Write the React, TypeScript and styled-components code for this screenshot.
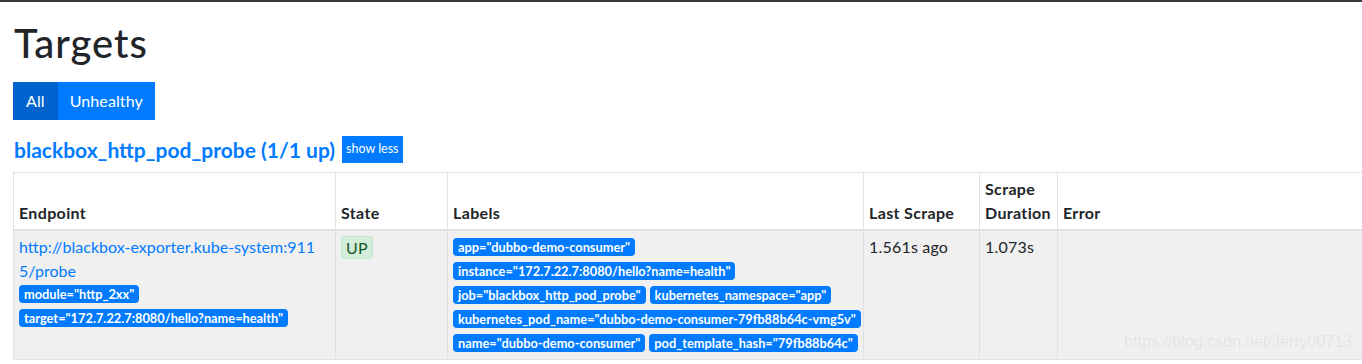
import React from "react";
import styled, { createGlobalStyle } from "styled-components";

const Global = createGlobalStyle`
  html, body { margin: 0; padding: 0; background: #fff; overflow: hidden; }
  body { font-family: Lato, "Noto Sans", sans-serif; color: #212529; font-size: 16px; line-height: 1.5; }
`;

const TopBar = styled.div`
  height: 2px;
  background: #343a40;
`;

const Page = styled.main`
  position: relative;
  padding: 0 0 0 13px;
  display: flex;
  flex-direction: column;
`;

const Title = styled.h1`
  margin: 17px 0 0 1px;
  font-size: 40px;
  font-weight: 500;
  line-height: 48px;
  letter-spacing: 1px;
`;

const Group = styled.div`
  display: flex;
  margin-top: 15px;
`;

const ToggleButton = styled.button<{ $active?: boolean }>`
  height: 38px;
  padding: 0 ${(p) => (p.$active ? "13px" : "12px")};
  border: none;
  font: inherit;
  font-size: 16px;
  letter-spacing: 0.1px;
  color: #fff;
  background: ${(p) => (p.$active ? "#0062cc" : "#007bff")};
  cursor: pointer;
`;

const JobHeader = styled.div`
  display: flex;
  align-items: center;
  gap: 7px;
  margin-top: 16px;
  height: 27px;
`;

const JobLink = styled.a`
  font-size: 21px;
  font-weight: 700;
  color: #007bff;
  text-decoration: none;
  margin-left: 1px;
`;

const SmallButton = styled.button`
  height: 27px;
  padding: 0 4px;
  border: none;
  background: #007bff;
  color: #fff;
  font: inherit;
  font-size: 12.5px;
`;

const Table = styled.table`
  margin-top: 9px;
  width: 1360px;
  border-collapse: collapse;
  table-layout: fixed;
`;

const Th = styled.th`
  text-align: left;
  vertical-align: bottom;
  font-weight: 700;
  padding: 4px 5px;
  border: 1px solid #dee2e6;
  border-bottom: 2px solid #dee2e6;
  line-height: 24px;
  letter-spacing: 0.35px;
`;

const Row = styled.tr`
  background: #f0f0f0;
`;

const Td = styled.td`
  vertical-align: top;
  padding: 4px 5px;
  border: 1px solid #dee2e6;
  line-height: 24px;
  letter-spacing: 0.2px;
`;

const EndpointLink = styled.a`
  color: #007bff;
  text-decoration: none;
  word-break: break-all;
  letter-spacing: 0;
`;

const BadgeList = styled.div`
  display: flex;
  flex-wrap: wrap;
  column-gap: 4px;
  row-gap: 6px;
  padding: 3px 0;
`;

const EndpointBadges = styled(BadgeList)`
  flex-direction: column;
  align-items: flex-start;
  padding-top: 2px;
`;

const Badge = styled.span`
  display: inline-block;
  background: #007bff;
  color: #fff;
  font-size: 12.8px;
  font-weight: 700;
  line-height: 12px;
  padding: 3px 5px;
  border-radius: 4px;
  white-space: nowrap;
  letter-spacing: 0;
`;

const StateBadge = styled.span`
  display: inline-block;
  margin-top: 1px;
  padding: 0 4px;
  line-height: 21px;
  background: #d4edda;
  border: 1px solid #c3e6cb;
  color: #155724;
  border-radius: 3px;
`;

const Watermark = styled.div`
  position: absolute;
  right: 10px;
  bottom: 6px;
  font-family: "Liberation Sans", Arial, sans-serif;
  font-size: 16px;
  color: #e2e2e2;
  text-shadow: 0 0 1px #fff;
  pointer-events: none;
`;

const labels = [
  'app="dubbo-demo-consumer"',
  'instance="172.7.22.7:8080/hello?name=health"',
  'job="blackbox_http_pod_probe"',
  'kubernetes_namespace="app"',
  'kubernetes_pod_name="dubbo-demo-consumer-79fb88b64c-vmg5v"',
  'name="dubbo-demo-consumer"',
  'pod_template_hash="79fb88b64c"',
];

export default function App() {
  return (
    <>
      <Global />
      <TopBar />
      <Page>
        <Title>Targets</Title>
        <Group>
          <ToggleButton $active>All</ToggleButton>
          <ToggleButton>Unhealthy</ToggleButton>
        </Group>
        <JobHeader>
          <JobLink href="#job-blackbox_http_pod_probe">blackbox_http_pod_probe (1/1 up)</JobLink>
          <SmallButton>show less</SmallButton>
        </JobHeader>
        <Table>
          <colgroup>
            <col style={{ width: 322 }} />
            <col style={{ width: 112 }} />
            <col style={{ width: 416 }} />
            <col style={{ width: 116 }} />
            <col style={{ width: 78 }} />
            <col />
          </colgroup>
          <thead>
            <tr>
              <Th>Endpoint</Th>
              <Th>State</Th>
              <Th>Labels</Th>
              <Th>Last Scrape</Th>
              <Th>Scrape Duration</Th>
              <Th>Error</Th>
            </tr>
          </thead>
          <tbody>
            <Row>
              <Td>
                <EndpointLink href="#">http://blackbox-exporter.kube-system:9115/probe</EndpointLink>
                <EndpointBadges>
                  <Badge>module="http_2xx"</Badge>
                  <Badge>target="172.7.22.7:8080/hello?name=health"</Badge>
                </EndpointBadges>
              </Td>
              <Td>
                <StateBadge>UP</StateBadge>
              </Td>
              <Td>
                <BadgeList>
                  {labels.map((l) => (
                    <Badge key={l}>{l}</Badge>
                  ))}
                </BadgeList>
              </Td>
              <Td>1.561s ago</Td>
              <Td>1.073s</Td>
              <Td />
            </Row>
          </tbody>
        </Table>
        <Watermark>https://blog.csdn.net/Jerry00713</Watermark>
      </Page>
    </>
  );
}
